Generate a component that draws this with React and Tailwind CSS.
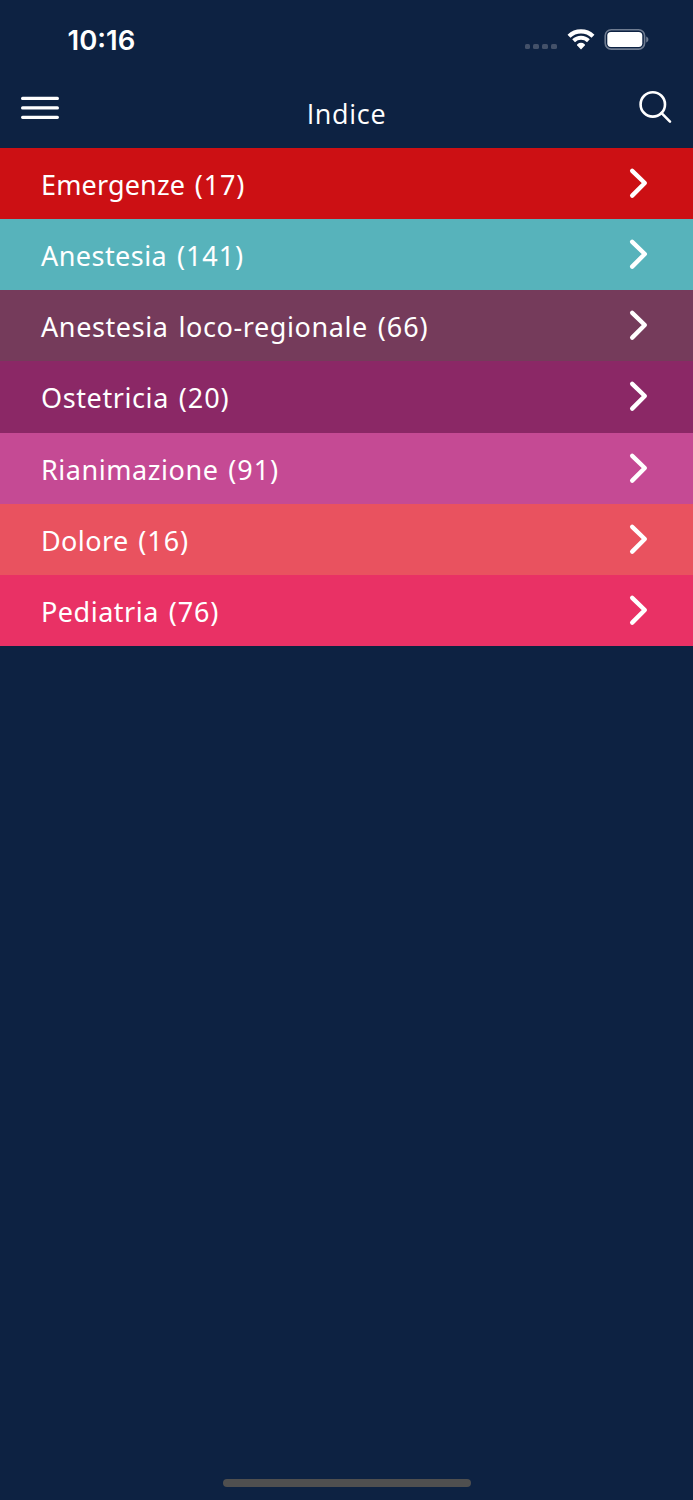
const categories = [
  { name: 'Emergenze', count: 17, color: 'bg-[#cc1014]', tracking: 'tracking-[0.15px]' },
  { name: 'Anestesia', count: 141, color: 'bg-[#57b3bb]', tracking: 'tracking-[0.45px]' },
  { name: 'Anestesia loco-regionale', count: 66, color: 'bg-[#753b5b]', tracking: 'tracking-[0.6px]' },
  { name: 'Ostetricia', count: 20, color: 'bg-[#8b2866]', tracking: 'tracking-[0.6px]' },
  { name: 'Rianimazione', count: 91, color: 'bg-[#c54a94]', tracking: 'tracking-[0.55px]' },
  { name: 'Dolore', count: 16, color: 'bg-[#e9525f]', tracking: 'tracking-[0.4px]' },
  { name: 'Pediatria', count: 76, color: 'bg-[#e93165]', tracking: 'tracking-[0.5px]' },
];

function WifiIcon() {
  return (
    <svg className="h-[21px] w-7" viewBox="0 0 28 21" fill="none" stroke="currentColor">
      <path d="M2 7.2a17.2 17.2 0 0 1 24 0" strokeWidth="4.2" />
      <path d="M6.6 11.8a10.7 10.7 0 0 1 14.8 0" strokeWidth="4" />
      <path d="M14 20.4l-3.8-3.8q-.6-.7.1-1.3a6 6 0 0 1 7.4 0q.7.6.1 1.3z" fill="currentColor" stroke="none" />
    </svg>
  );
}

function BatteryIcon() {
  return (
    <svg className="h-[22px] w-[46px]" viewBox="0 0 46 22" fill="none">
      <rect x="1.2" y="1.7" width="39.4" height="19.4" rx="6" stroke="#6f7c91" strokeWidth="1.6" />
      <rect x="3.3" y="3.9" width="35" height="15" rx="3.6" fill="white" />
      <path d="M42.2 8.5c2.9 1 2.9 5 0 6z" fill="#6f7c91" />
    </svg>
  );
}

function StatusBar() {
  return (
    <div className="flex h-20 items-center pl-[67.5px] pr-[43.5px]">
      <span className="font-['Inter',sans-serif] text-[27.5px] font-semibold leading-8">10:16</span>
      <div className="mb-[2px] ml-auto flex items-center">
        {/* No cellular signal */}
        <div className="mr-[10px] mt-[15px] flex gap-[3px]">
          <span className="size-[5.7px] rounded-[1.6px] bg-[#435169]" />
          <span className="size-[5.7px] rounded-[1.6px] bg-[#435169]" />
          <span className="size-[5.7px] rounded-[1.6px] bg-[#435169]" />
          <span className="size-[5.7px] rounded-[1.6px] bg-[#435169]" />
        </div>
        <WifiIcon />
        <span className="ml-[9px]">
          <BatteryIcon />
        </span>
      </div>
    </div>
  );
}

function Header() {
  return (
    <header className="flex h-[67.8px] items-start justify-between px-5">
      <button aria-label="Menu" className="mt-[15px] w-10">
        <svg className="h-6 w-10" viewBox="0 0 40 24" stroke="currentColor" strokeWidth="3.2" strokeLinecap="round">
          <path d="M2.6 3.4h34.8M2.6 12.9h34.8M2.6 22.3h34.8" />
        </svg>
      </button>
      <h1 className="mt-4 font-['Open_Sans',sans-serif] text-[27px] leading-9 tracking-[0.7px]">Indice</h1>
      <button aria-label="Cerca" className="mt-[10px] w-10">
        <svg className="h-9 w-10" viewBox="0 0 40 36" fill="none" stroke="currentColor" strokeWidth="2.6" strokeLinecap="round">
          <circle cx="19.8" cy="14.4" r="12.2" />
          <path d="M28.6 23.2l8.4 8.4" />
        </svg>
      </button>
    </header>
  );
}

function CategoryRow({ name, count, color, tracking }) {
  return (
    <li className={`flex h-[71.2px] items-center justify-between pl-[41px] pr-11 ${color}`}>
      <span className={`pt-[3px] text-[27px] leading-9 [word-spacing:2.3px] ${tracking}`}>
        {name} <span className="tracking-[0.9px]">({count})</span>
      </span>
      <svg className="mb-px h-8 w-[22px]" viewBox="0 0 22 32" fill="none" stroke="currentColor" strokeWidth="4.4" strokeLinecap="round" strokeLinejoin="round">
        <path d="M5.2 3.8L17.8 16 5.2 28.6" />
      </svg>
    </li>
  );
}

export default function App() {
  return (
    <div className="flex h-[1500px] w-[693px] flex-col bg-[#0d2242] font-['Noto_Sans',sans-serif] text-white">
      <StatusBar />
      <Header />
      <ul>
        {categories.map((category) => (
          <CategoryRow key={category.name} {...category} />
        ))}
      </ul>
      {/* Home indicator */}
      <div className="mx-auto mb-[13px] mt-auto h-2 w-[248px] rounded-full bg-[#4f4f4f]" />
    </div>
  );
}
